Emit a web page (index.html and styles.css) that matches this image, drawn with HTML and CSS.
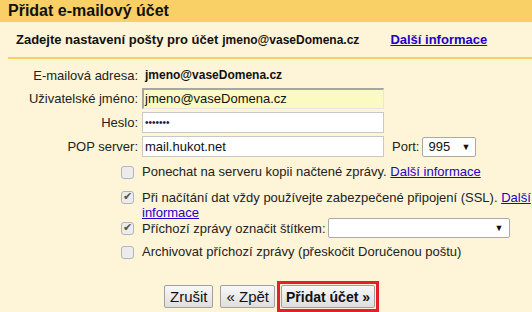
FILE: index.html
```html
<!DOCTYPE html>
<html lang="cs">
<head>
    <meta charset="UTF-8">
    <title>Přidat e-mailový účet</title>
    <link rel="stylesheet" href="styles.css">
</head>
<body>
    <div class="title-bar">Přidat e-mailový účet</div>

    <div class="intro">
        <span class="intro-text">Zadejte nastavení pošty pro účet</span>
        <span class="intro-email">jmeno@vaseDomena.cz</span>
        <a href="#" class="intro-link">Další informace</a>
    </div>

    <div class="form">
        <div class="row row-plain">
            <div class="label">E-mailová adresa:</div>
            <div class="value">jmeno@vaseDomena.cz</div>
        </div>
        <div class="row">
            <div class="label">Uživatelské jméno:</div>
            <div class="field field-filled">jmeno@vaseDomena.cz</div>
        </div>
        <div class="row">
            <div class="label">Heslo:</div>
            <div class="field field-pass">&bull;&bull;&bull;&bull;&bull;&bull;&bull;</div>
        </div>
        <div class="row">
            <div class="label">POP server:</div>
            <div class="field">mail.hukot.net</div>
            <div class="port-label">Port:</div>
            <div class="select select-port">
                <span>995</span>
                <span class="arrow">&#9660;</span>
            </div>
        </div>

        <div class="check-row first">
            <div class="label"><span class="check"></span></div>
            <div class="check-text">Ponechat na serveru kopii načtené zprávy. <a href="#">Další informace</a></div>
        </div>
        <div class="check-row wrap">
            <div class="label"><span class="check checked"></span></div>
            <div class="check-text">Při načítání dat vždy používejte zabezpečené připojení (SSL). <a href="#">Další</a> <a href="#">informace</a></div>
        </div>
        <div class="check-row tight">
            <div class="label"><span class="check checked"></span></div>
            <div class="check-text">Příchozí zprávy označit štítkem:</div>
            <div class="select select-label">
                <span></span>
                <span class="arrow">&#9660;</span>
            </div>
        </div>
        <div class="check-row">
            <div class="label"><span class="check"></span></div>
            <div class="check-text">Archivovat příchozí zprávy (přeskočit Doručenou poštu)</div>
        </div>
    </div>

    <div class="actions">
        <button class="btn">Zrušit</button>
        <button class="btn">« Zpět</button>
        <div class="highlight">
            <button class="btn btn-primary">Přidat účet »</button>
        </div>
    </div>
</body>
</html>
```

FILE: styles.css
```css
body {
    margin: 0;
    font-family: "Liberation Sans", Arial, sans-serif;
    font-size: 13px;
    color: #222;
    background: #fef5d8;
    height: 312px;
    overflow: hidden;
}

.title-bar {
    height: 22px;
    line-height: 22px;
    padding-left: 8px;
    background: #f9d066;
    font-size: 16px;
    font-weight: bold;
    color: #111;
}

.intro {
    display: flex;
    align-items: center;
    height: 35px;
    margin-left: 8px;
    padding-left: 8px;
    border-bottom: 2px solid #f9d066;
    font-weight: bold;
    color: #111;
}

.intro-email {
    margin-left: 4px;
    font-size: 12px;
}

.intro-link {
    margin-left: 31px;
    color: #2200cc;
}

.form {
    padding-top: 6px;
}

/* label + field rows */
.row {
    display: flex;
    align-items: center;
    height: 21px;
    margin-bottom: 3px;
}

.row-plain {
    height: 20px;
}

.label {
    width: 138px;
    padding-right: 4px;
    text-align: right;
    flex-shrink: 0;
    color: #222;
}

.value {
    padding-left: 3px;
    font-weight: bold;
    font-size: 12px;
    color: #111;
}

.field {
    box-sizing: border-box;
    width: 242px;
    height: 21px;
    line-height: 19px;
    padding-left: 2px;
    background: #fff;
    border: 1px solid #c8c8c8;
    color: #111;
}

.field-filled {
    background: #fafac2;
    border-width: 2px 1px 1px 2px;
    border-color: #a6a6a6 #e6e6e6 #e6e6e6 #a6a6a6;
    line-height: 18px;
    padding-left: 1px;
}

.field-pass {
    font-size: 10px;
    color: #1a1a4a;
}

.port-label {
    margin-left: 8px;
    margin-right: 3px;
}

.select {
    box-sizing: border-box;
    display: flex;
    align-items: center;
    justify-content: space-between;
    height: 20px;
    padding: 0 5px;
    background: #fff;
    border: 1px solid #a9a9a9;
    border-radius: 2px;
    color: #111;
}

.select .arrow {
    font-size: 9px;
}

.select-port {
    width: 54px;
}

.select-label {
    width: 182px;
    margin-left: 2px;
}

/* checkbox rows */
.check-row {
    display: flex;
    align-items: center;
    min-height: 20px;
    margin-top: 4px;
}

.check-row.first {
    margin-top: 5px;
}

.check-row.wrap {
    align-items: flex-start;
    margin-top: 8px;
}

.check-row.wrap .label {
    padding-top: 1px;
}

.check-row.wrap .check-text {
    line-height: 15px;
}

.check-row.tight {
    margin-top: -2px;
}

.check-row .label {
    display: flex;
    justify-content: flex-end;
    padding-right: 8px;
    width: 134px;
}

.check-text {
    line-height: 16px;
    max-width: 390px;
}

.check-row.tight .check-text {
    line-height: 15px;
}

.check-text a {
    color: #2200cc;
}

.check {
    box-sizing: border-box;
    width: 13px;
    height: 13px;
    border: 1px solid #b4b4b4;
    border-radius: 3px;
    background: #ececec;
    position: relative;
}

.check.checked::after {
    content: "\2714";
    position: absolute;
    left: 1px;
    top: -2px;
    font-size: 11px;
    color: #555;
}

.actions {
    display: flex;
    justify-content: center;
    align-items: center;
    gap: 7px;
    margin-top: 19px;
    padding-left: 11px;
}

.btn {
    height: 23px;
    padding: 0 5px;
    font-family: "Liberation Sans", Arial, sans-serif;
    font-size: 15px;
    color: #111;
    background: linear-gradient(#f8f8f8, #dedede);
    border: 1px solid #a0a0a0;
    border-radius: 2px;
}

.btn-primary {
    padding: 0 4px;
    font-size: 14px;
    font-weight: bold;
}

.highlight {
    margin-left: -5px;
    padding: 1px;
    border: 3px solid #e3202a;
}
```
